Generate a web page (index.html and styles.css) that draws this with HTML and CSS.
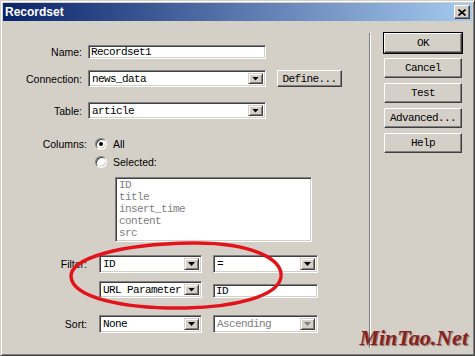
FILE: index.html
```html
<!DOCTYPE html>
<html>
<head>
    <title>Recordset</title>
    <link rel="stylesheet" href="styles.css">
</head>
<body>

<div class="window">
    <div class="titlebar">
        <span class="title">Recordset</span>
        <span class="close">
            <svg width="8" height="7" viewBox="0 0 8 7"><path d="M0.5 0.5 L7.5 6.5 M7.5 0.5 L0.5 6.5" stroke="#000" stroke-width="1.6" fill="none"/></svg>
        </span>
    </div>

    <div class="client">
        <div class="form">
            <div class="row row-name">
                <span class="lbl">Name:</span>
                <div class="edit w-wide">Recordset1</div>
            </div>
            <div class="row row-conn">
                <span class="lbl">Connection:</span>
                <div class="combo w-wide"><span class="combo-text">news_data</span><span class="combo-btn"></span></div>
                <div class="btn btn-define">Define...</div>
            </div>
            <div class="row row-table">
                <span class="lbl">Table:</span>
                <div class="combo w-wide"><span class="combo-text">article</span><span class="combo-btn"></span></div>
            </div>

            <div class="row row-cols">
                <span class="lbl lbl-low">Columns:</span>
                <div class="choices">
                    <div class="opt"><span class="radio checked"></span><span>All</span></div>
                    <div class="opt"><span class="radio"></span><span>Selected:</span></div>
                    <div class="listbox">
                        <div>ID</div>
                        <div>title</div>
                        <div>insert_time</div>
                        <div>content</div>
                        <div>src</div>
                    </div>
                </div>
            </div>

            <div class="row row-filter">
                <span class="lbl lbl-low">Filter:</span>
                <div class="combo w-half"><span class="combo-text">ID</span><span class="combo-btn"></span></div>
                <div class="combo w-right"><span class="combo-text">=</span><span class="combo-btn"></span></div>
            </div>
            <div class="row row-param">
                <span class="lbl lbl-low"></span>
                <div class="combo w-half"><span class="combo-text">URL Parameter</span><span class="combo-btn"></span></div>
                <div class="edit w-right edit-param">ID</div>
            </div>
            <div class="row row-sort">
                <span class="lbl lbl-low">Sort:</span>
                <div class="combo w-half"><span class="combo-text">None</span><span class="combo-btn"></span></div>
                <div class="combo w-right disabled"><span class="combo-text">Ascending</span><span class="combo-btn"></span></div>
            </div>
        </div>

        <div class="sep"></div>

        <div class="buttons">
            <div class="btn btn-default">OK</div>
            <div class="btn">Cancel</div>
            <div class="btn">Test</div>
            <div class="btn">Advanced...</div>
            <div class="btn">Help</div>
        </div>
    </div>

    <!-- hand drawn marker over the filter rows -->
    <svg class="marker" width="475" height="356" viewBox="0 0 475 356">
        <path d="M190 242 C250 241 282 258 280 276 C277 296 232 306 185 307 C120 308 72 296 70 276 C69 257 120 243 190 242 Z" fill="none" stroke="#e3121b" stroke-width="3.4"/>
    </svg>
    <div class="watermark">MinTao.Net</div>
</div>

</body>
</html>
```

FILE: styles.css
```css
html,
body {
    margin: 0;
}

body {
    font-family: "Liberation Sans", Arial, sans-serif;
    font-size: 10.5px;
    color: #000;
}

.window {
    position: relative;
    width: 475px;
    height: 356px;
    box-sizing: border-box;
    background: #d4d0c8;
    border: 1px solid;
    border-color: #d4d0c8 #404040 #404040 #d4d0c8;
    box-shadow: inset 1px 1px #fff, inset -1px -1px #808080;
    padding: 2px;
    overflow: hidden;
}

.titlebar {
    height: 18px;
    background: linear-gradient(to right, #0a246a, #a6caf0);
    display: flex;
    align-items: center;
    justify-content: space-between;
    padding: 0 2px;
}

.title {
    color: #fff;
    font-weight: bold;
    font-size: 12px;
}

.close {
    width: 16px;
    height: 14px;
    box-sizing: border-box;
    background: #d4d0c8;
    border: 1px solid;
    border-color: #fff #404040 #404040 #fff;
    box-shadow: inset -1px -1px #808080;
    display: flex;
    align-items: center;
    justify-content: center;
}

.close svg {
    display: block;
}

.client {
    display: flex;
    height: 332px;
}

.form {
    width: 366px;
    padding-top: 22px;
    flex: none;
}

.row {
    display: flex;
    align-items: center;
    height: 17px;
}

.row-conn { margin-top: 10px; }
.row-table { margin-top: 15px; }
.row-cols {
    margin-top: 18px;
    height: auto;
    align-items: flex-start;
}
.row-filter { margin-top: 13px; height: 18px; }
.row-param { margin-top: 8px; }
.row-sort { margin-top: 17px; height: 18px; }

.lbl {
    width: 79px;
    margin-right: 6px;
    text-align: right;
    flex: none;
}

.lbl-low {
    width: 84px;
    margin-right: 12px;
}

.row-cols .lbl {
    margin-right: 8px;
    line-height: 14px;
}

/* win2000 sunken field */
.edit,
.combo,
.listbox {
    box-sizing: border-box;
    background: #fff;
    border: 1px solid;
    border-color: #808080 #fff #fff #808080;
    box-shadow: inset 1px 1px #404040, inset -1px -1px #d4d0c8;
    font-family: "Liberation Mono", "Courier New", monospace;
    font-size: 11px;
    letter-spacing: -0.6px;
}

.edit {
    height: 14px;
    line-height: 12px;
    padding-left: 2px;
}

.edit-param {
    margin-top: 2px;
}

.combo {
    height: 100%;
    display: flex;
    align-items: stretch;
    padding: 2px;
}

.combo-text {
    flex: 1;
    padding-left: 1px;
    line-height: 13px;
    white-space: nowrap;
    overflow: hidden;
}

.combo-btn {
    width: 15px;
    flex: none;
    box-sizing: border-box;
    background: #d4d0c8;
    border: 1px solid;
    border-color: #d4d0c8 #404040 #404040 #d4d0c8;
    box-shadow: inset 1px 1px #fff, inset -1px -1px #808080;
    display: flex;
    align-items: center;
    justify-content: center;
}

.combo-btn::after {
    content: "";
    width: 7px;
    height: 4px;
    background: #000;
    clip-path: polygon(0 0, 100% 0, 50% 100%);
}

.combo.disabled .combo-text {
    color: #808080;
}

.combo.disabled .combo-btn::after {
    background: #808080;
}

.w-wide { width: 178px; }
.w-half { width: 103px; }
.w-right { width: 105px; margin-left: 11px; }

.choices {
    display: flex;
    flex-direction: column;
}

.opt {
    display: flex;
    align-items: center;
    height: 14px;
}

.opt + .opt {
    margin-top: 4px;
}

.radio {
    position: relative;
    width: 12px;
    height: 12px;
    box-sizing: border-box;
    border-radius: 50%;
    background: #fff;
    border: 1px solid;
    border-color: #808080 #fff #fff #808080;
    box-shadow: inset 1px 1px #404040, inset -1px -1px #d4d0c8;
    margin-right: 6px;
    flex: none;
}

.radio.checked::after {
    content: "";
    position: absolute;
    left: 3px;
    top: 3px;
    width: 4px;
    height: 4px;
    border-radius: 50%;
    background: #000;
}

.listbox {
    width: 197px;
    height: 65px;
    margin-top: 8px;
    margin-left: 20px;
    padding: 1px 3px;
    color: #808080;
    line-height: 12px;
}

.sep {
    width: 1px;
    height: 315px;
    margin-top: 12px;
    background: #808080;
    border-right: 1px solid #fff;
    flex: none;
}

.buttons {
    margin-left: 13px;
    padding-top: 12px;
    display: flex;
    flex-direction: column;
    gap: 5px;
}

.btn {
    width: 78px;
    height: 20px;
    box-sizing: border-box;
    background: #d4d0c8;
    border: 1px solid;
    border-color: #fff #404040 #404040 #fff;
    box-shadow: inset -1px -1px #808080;
    display: flex;
    align-items: center;
    justify-content: center;
    font-family: "Liberation Mono", "Courier New", monospace;
    font-size: 11px;
    letter-spacing: -0.6px;
}

.btn-default {
    outline: 1px solid #000;
    outline-offset: 0;
    border-color: #fff #404040 #404040 #fff;
}

.btn-define {
    width: 65px;
    height: 17px;
    margin-left: 11px;
}

.marker {
    position: absolute;
    left: 0;
    top: 0;
    pointer-events: none;
}

.watermark {
    position: absolute;
    right: 6px;
    bottom: 4px;
    font-family: "Liberation Serif", "Times New Roman", serif;
    font-style: italic;
    font-weight: bold;
    font-size: 22px;
    color: #852222;
    text-shadow: 1px 1px 1px rgba(60, 0, 0, 0.45);
}
```
